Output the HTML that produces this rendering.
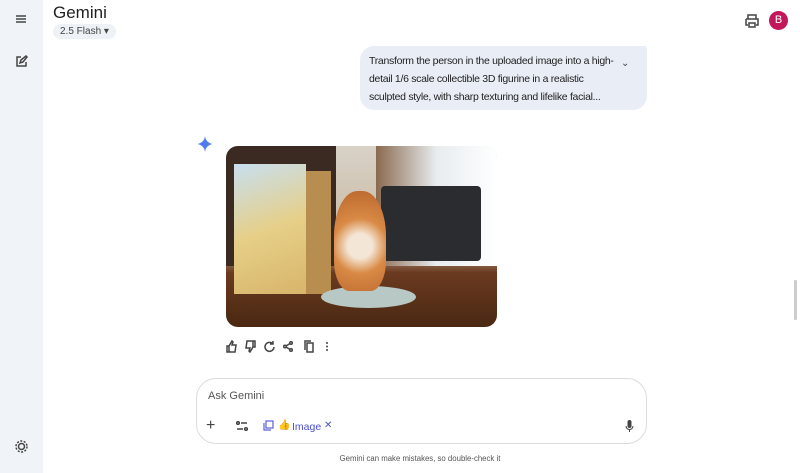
<!DOCTYPE html>
<html><head><style>
body{margin:0;width:800px;height:473px;overflow:hidden;font-family:"Liberation Sans",sans-serif;background:#fff;position:relative}
.side{position:absolute;left:0;top:0;width:43px;height:473px;background:#f0f3f8}
.a{position:absolute}
.ic{stroke:#444;fill:none;stroke-width:1.5}
</style></head><body>
<div class="side"></div>
<svg class="a" style="left:15px;top:14px" width="12" height="10"><path class="ic" d="M1 2h10M1 5h10M1 8h10"/></svg>
<svg class="a" style="left:15px;top:55px" width="13" height="13"><path class="ic" d="M6 2H2v9h9V7M5 8l1-3 5-4 1 1-4 5z"/></svg>
<svg class="a" style="left:15px;top:440px" width="13" height="13"><circle class="ic" cx="6.5" cy="6.5" r="3"/><circle class="ic" cx="6.5" cy="6.5" r="5.5" stroke-dasharray="2 1.5"/></svg>
<div class="a" style="left:53px;top:3px;font-size:17px;color:#1f1f1f">Gemini</div>
<div class="a" style="left:53px;top:24px;height:15px;padding:0 7px;border-radius:8px;background:#eef1f6;font-size:10px;line-height:15px;color:#444">2.5 Flash ▾</div>
<svg class="a" style="left:745px;top:14px" width="14" height="14"><path class="ic" d="M3 5V1h8v4M1 5h12v6h-2M3 11H1V5M4 9h6v4H4z"/></svg>
<div class="a" style="left:769px;top:11px;width:19px;height:19px;border-radius:50%;background:#c2185b;color:#fff;font-size:11px;text-align:center;line-height:19px">B</div>
<div class="a" style="left:360px;top:46px;width:287px;height:64px;background:#e9eef6;border-radius:14px 3px 14px 14px"></div>
<div class="a" style="left:369px;top:52px;white-space:nowrap;font-size:10.5px;letter-spacing:-0.3px;line-height:18px;color:#1f1f1f">Transform the person in the uploaded image into a high-<br>detail 1/6 scale collectible 3D figurine in a realistic<br>sculpted style, with sharp texturing and lifelike facial...</div>
<div class="a" style="left:621px;top:58px;font-size:10px;color:#444">⌄</div>
<svg class="a" style="left:197px;top:136px" width="16" height="16"><path d="M8 0C8.5 4.5 11.5 7.5 16 8 11.5 8.5 8.5 11.5 8 16 7.5 11.5 4.5 8.5 0 8 4.5 7.5 7.5 4.5 8 0z" fill="#4f7df0"/></svg>
<div class="a" style="left:226px;top:146px;width:271px;height:181px;border-radius:12px;overflow:hidden;background:linear-gradient(180deg,#d8d2c8 0%,#c9b8a0 55%,#6a3a20 70%,#4a2812 100%)">
 <div class="a" style="left:150px;top:0;width:121px;height:120px;background:linear-gradient(90deg,#8a6a50,#e8ecef 50%,#fff)"></div>
 <div class="a" style="left:0;top:0;width:110px;height:120px;background:#3a2a22"></div>
 <div class="a" style="left:8px;top:18px;width:72px;height:130px;background:linear-gradient(160deg,#c8dff0,#e6cf88 50%,#d8b56a);"></div>
 <div class="a" style="left:80px;top:25px;width:25px;height:123px;background:#b88d50"></div>
 <div class="a" style="left:155px;top:40px;width:100px;height:75px;background:#2a2c30;border-radius:4px"></div>
 <div class="a" style="left:95px;top:140px;width:95px;height:22px;border-radius:50%;background:#b8c8c4"></div>
 <div class="a" style="left:108px;top:45px;width:52px;height:100px;border-radius:45% 45% 30% 30%;background:radial-gradient(circle at 50% 55%,#f4e6d6 20%,#d98a45 45%,#b8652c)"></div>
</div>
<svg class="a" style="left:226px;top:340px" width="110" height="13"><g class="ic" stroke-width="1.1"><path d="M1 6h2v6H1zM3 6l3-5 1 1-1 3h4l-1 7H3"/><path d="M29 7h-2V1h2zM27 7l-3 5-1-1 1-3h-4l1-7h6"/><path d="M47 4a4.5 4.5 0 1 0 1 3M47 1v3h-3"/><circle cx="65" cy="3" r="1.3"/><circle cx="59" cy="6.5" r="1.3"/><circle cx="65" cy="10" r="1.3"/><path d="M60 6l4-2.5M60 7l4 2.5"/><path d="M81 3h6v9h-6zM79 10V1h6"/></g><g fill="#444"><circle cx="101" cy="3" r="1"/><circle cx="101" cy="6.5" r="1"/><circle cx="101" cy="10" r="1"/></g></svg>
<div class="a" style="left:196px;top:378px;width:449px;height:64px;border:1px solid #dcdcdc;border-radius:20px;background:#fff"></div>
<div class="a" style="left:208px;top:390px;font-size:11px;color:#555">Ask Gemini</div>
<div class="a" style="left:206px;top:417px;font-size:16px;color:#444">+</div>
<svg class="a" style="left:236px;top:421px" width="12" height="10"><g class="ic" stroke-width="1.1"><circle cx="2" cy="2" r="1.3"/><path d="M5 2h6M1 8h6"/><circle cx="10" cy="8" r="1.3"/></g></svg>
<svg class="a" style="left:263px;top:420px" width="11" height="11"><g stroke="#5b5fd8" fill="none" stroke-width="1.2"><rect x="3" y="1" width="7" height="7"/><path d="M1 3v7h7"/></g></svg>
<div class="a" style="left:278px;top:420px;font-size:10px">👍</div>
<div class="a" style="left:292px;top:421px;font-size:10.5px;color:#4b4fd0">Image</div>
<div class="a" style="left:324px;top:420px;font-size:10px;color:#4b4fd0">✕</div>
<svg class="a" style="left:625px;top:420px" width="9" height="12"><rect x="2.5" y="0" width="4" height="8" rx="2" fill="#444"/><path d="M1 6a3.5 3.5 0 0 0 7 0M4.5 10v2" stroke="#444" fill="none"/></svg>
<div class="a" style="left:0;width:840px;top:454px;text-align:center;font-size:7.8px;color:#555">Gemini can make mistakes, so double-check it</div>
<div class="a" style="left:794px;top:280px;width:3px;height:40px;background:#ccc;border-radius:2px"></div>
</body></html>
